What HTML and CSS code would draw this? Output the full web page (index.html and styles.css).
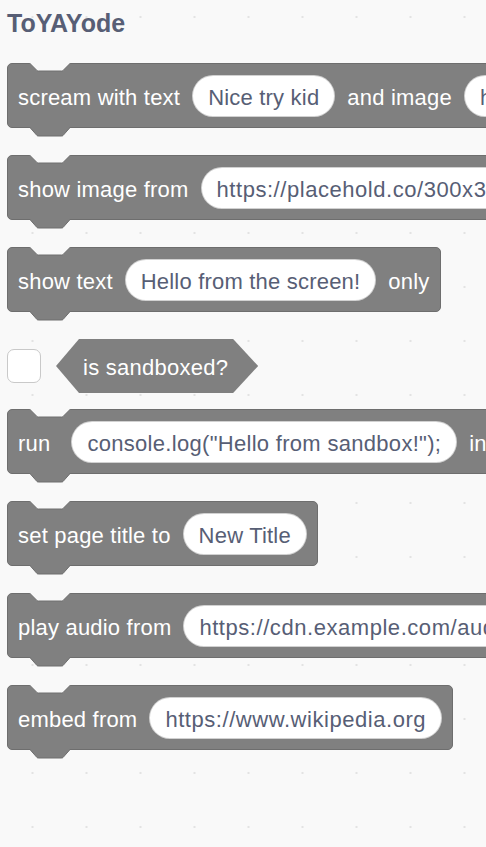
FILE: index.html
```html
<!DOCTYPE html>
<html lang="en">
<head>
<meta charset="utf-8">
<title>ToYAYode</title>
<link rel="stylesheet" href="styles.css">
</head>
<body>
<main class="palette">
  <h1 class="title">ToYAYode</h1>

  <div class="block">
    <span class="label">scream with text</span>
    <span class="input">Nice try kid</span>
    <span class="label">and image</span>
    <span class="input url">https://placehold.co/300x300</span>
    <svg class="notch" width="42" height="10" viewBox="0 0 42 10"><path d="M0.5 0 L8 7.5 Q8.5 8 9.5 8 L32.5 8 Q33.5 8 34 7.5 L41.5 0"/></svg>
    <svg class="tab" width="42" height="11" viewBox="0 0 42 11"><path d="M0.5 0 L8 8.5 Q8.5 9 9.5 9 L32.5 9 Q33.5 9 34 8.5 L41.5 0"/></svg>
  </div>

  <div class="block">
    <span class="label">show image from</span>
    <span class="input url">https://placehold.co/300x300</span>
    <svg class="notch" width="42" height="10" viewBox="0 0 42 10"><path d="M0.5 0 L8 7.5 Q8.5 8 9.5 8 L32.5 8 Q33.5 8 34 7.5 L41.5 0"/></svg>
    <svg class="tab" width="42" height="11" viewBox="0 0 42 11"><path d="M0.5 0 L8 8.5 Q8.5 9 9.5 9 L32.5 9 Q33.5 9 34 8.5 L41.5 0"/></svg>
  </div>

  <div class="block">
    <span class="label">show text</span>
    <span class="input">Hello from the screen!</span>
    <span class="label">only</span>
    <svg class="notch" width="42" height="10" viewBox="0 0 42 10"><path d="M0.5 0 L8 7.5 Q8.5 8 9.5 8 L32.5 8 Q33.5 8 34 7.5 L41.5 0"/></svg>
    <svg class="tab" width="42" height="11" viewBox="0 0 42 11"><path d="M0.5 0 L8 8.5 Q8.5 9 9.5 9 L32.5 9 Q33.5 9 34 8.5 L41.5 0"/></svg>
  </div>

  <div class="bool-row">
    <span class="checkbox"></span>
    <span class="hexagon">is sandboxed?</span>
  </div>

  <div class="block">
    <span class="label">run</span>
    <span class="input code">console.log("Hello from sandbox!");</span>
    <span class="label">in sandbox</span>
    <svg class="notch" width="42" height="10" viewBox="0 0 42 10"><path d="M0.5 0 L8 7.5 Q8.5 8 9.5 8 L32.5 8 Q33.5 8 34 7.5 L41.5 0"/></svg>
    <svg class="tab" width="42" height="11" viewBox="0 0 42 11"><path d="M0.5 0 L8 8.5 Q8.5 9 9.5 9 L32.5 9 Q33.5 9 34 8.5 L41.5 0"/></svg>
  </div>

  <div class="block">
    <span class="label">set page title to</span>
    <span class="input">New Title</span>
    <svg class="notch" width="42" height="10" viewBox="0 0 42 10"><path d="M0.5 0 L8 7.5 Q8.5 8 9.5 8 L32.5 8 Q33.5 8 34 7.5 L41.5 0"/></svg>
    <svg class="tab" width="42" height="11" viewBox="0 0 42 11"><path d="M0.5 0 L8 8.5 Q8.5 9 9.5 9 L32.5 9 Q33.5 9 34 8.5 L41.5 0"/></svg>
  </div>

  <div class="block">
    <span class="label">play audio from</span>
    <span class="input url">https://cdn.example.com/audio.mp3</span>
    <svg class="notch" width="42" height="10" viewBox="0 0 42 10"><path d="M0.5 0 L8 7.5 Q8.5 8 9.5 8 L32.5 8 Q33.5 8 34 7.5 L41.5 0"/></svg>
    <svg class="tab" width="42" height="11" viewBox="0 0 42 11"><path d="M0.5 0 L8 8.5 Q8.5 9 9.5 9 L32.5 9 Q33.5 9 34 8.5 L41.5 0"/></svg>
  </div>

  <div class="block">
    <span class="label">embed from</span>
    <span class="input url">https://www.wikipedia.org</span>
    <svg class="notch" width="42" height="10" viewBox="0 0 42 10"><path d="M0.5 0 L8 7.5 Q8.5 8 9.5 8 L32.5 8 Q33.5 8 34 7.5 L41.5 0"/></svg>
    <svg class="tab" width="42" height="11" viewBox="0 0 42 11"><path d="M0.5 0 L8 8.5 Q8.5 9 9.5 9 L32.5 9 Q33.5 9 34 8.5 L41.5 0"/></svg>
  </div>
</main>
</body>
</html>
```

FILE: styles.css
```css
html, body {
  margin: 0;
  padding: 0;
  overflow: hidden;
}

body {
  min-height: 100vh;
  background-color: #f9f9f9;
  background-image: radial-gradient(circle at center, #e3e3e3 0.9px, rgba(249, 249, 249, 0) 1.6px);
  background-size: 54px 54px;
  background-position: 5.5px -10px;
  font-family: "Liberation Sans", Arial, sans-serif;
}

.palette {
  display: flex;
  flex-direction: column;
  align-items: flex-start;
  padding: 8px 7px;
}

.title {
  margin: 0 0 25px;
  font: bold 25px/30px "Liberation Sans", Arial, sans-serif;
  color: #575e75;
}

.block {
  position: relative;
  display: flex;
  align-items: center;
  gap: 12px;
  flex-shrink: 0;
  white-space: nowrap;
  background: #808080;
  border: 1px solid #6e6e6e;
  border-radius: 5px;
  padding: 11px 10px 10px 10px;
  margin-bottom: 27px;
  color: #fff;
  font-size: 22px;
  letter-spacing: 0.2px;
}

.label {
  line-height: 26px;
  padding-top: 3px;
}

.input {
  display: inline-flex;
  align-items: center;
  height: 42px;
  box-sizing: border-box;
  padding: 3px 15px 0;
  background: #fff;
  border: 1px solid rgba(0, 0, 0, 0.18);
  border-radius: 21px;
  color: #575e75;
}

.input.url {
  letter-spacing: 0.55px;
}

.input.code {
  margin-left: 9px;
  letter-spacing: 0.3px;
}

.notch {
  position: absolute;
  top: -1px;
  left: 21px;
  overflow: visible;
}

.notch path {
  fill: #f9f9f9;
  stroke: #6e6e6e;
  stroke-width: 1;
}

.tab {
  position: absolute;
  top: 100%;
  left: 21px;
  overflow: visible;
}

.tab path {
  fill: #808080;
  stroke: #6e6e6e;
  stroke-width: 1;
}

.bool-row {
  display: flex;
  align-items: center;
  gap: 15px;
  height: 54px;
  margin-bottom: 16px;
}

.checkbox {
  width: 34px;
  height: 34px;
  box-sizing: border-box;
  background: #fff;
  border: 1px solid #c9c9c9;
  border-radius: 7px;
}

.hexagon {
  display: flex;
  align-items: center;
  height: 54px;
  box-sizing: border-box;
  padding: 3px 30px 0 27px;
  background: #808080;
  color: #fff;
  font-size: 22px;
  letter-spacing: 0.25px;
  white-space: nowrap;
  clip-path: polygon(0 50%, 23px 0, calc(100% - 25px) 0, 100% 50%, calc(100% - 25px) 100%, 23px 100%);
}
```
